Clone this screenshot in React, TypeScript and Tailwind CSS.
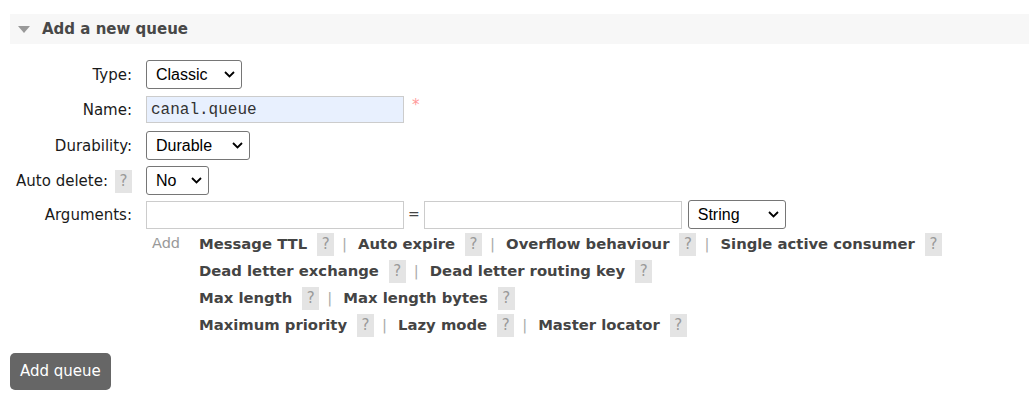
import { ReactNode } from "react";

const verdana = "font-['DejaVu_Sans',Verdana,sans-serif]";

function Help() {
  return (
    <span className="inline-flex h-[23px] w-[17px] items-center justify-center bg-[#e4e4e4] text-[15px] text-[#999] font-normal">
      ?
    </span>
  );
}

function Select({ value, width }: { value: string; width: string }) {
  return (
    <div className={`relative ${width}`}>
      <select
        defaultValue={value}
        className="block h-[29px] w-full appearance-none rounded-[3px] border border-[#767676] bg-white pl-[9px] font-['Liberation_Sans',Arial,sans-serif] text-[16px] text-black"
      >
        <option>{value}</option>
      </select>
      <svg
        className="pointer-events-none absolute right-[7px] top-[11px]"
        width="11"
        height="7"
        viewBox="0 0 11 7"
      >
        <path d="M1 1l4.5 4.5L10 1" fill="none" stroke="#000" strokeWidth="1.8" />
      </svg>
    </div>
  );
}

function Row({ label, children, className = "" }: { label: ReactNode; children: ReactNode; className?: string }) {
  return (
    <div className={`flex items-center ${className}`}>
      <div className="flex w-[122px] items-center justify-end gap-[7px] whitespace-nowrap pt-[2px] text-[15px] text-[#1a1a1a]">{label}</div>
      <div className="ml-[14px] flex items-center">{children}</div>
    </div>
  );
}

function Arg({ name, last }: { name: string; last?: boolean }) {
  return (
    <>
      <span className="font-bold text-[#444]">{name}</span>
      <span className="ml-[10px]">
        <Help />
      </span>
      {!last && <span className="ml-[8px] mr-[11px] text-[#aaa] font-normal">|</span>}
    </>
  );
}

export default function App() {
  return (
    <div className={`h-[408px] w-[1029px] bg-white ${verdana}`}>
      <div className="pl-[10px] pt-[14px]">
        <div className="flex h-[30px] items-center bg-[#f7f7f7]">
          <svg className="ml-[8px]" width="12" height="7" viewBox="0 0 12 7">
            <path d="M0 0h12L6 7z" fill="#999" />
          </svg>
          <h2 className="ml-[12px] text-[15px] font-bold text-[#484848]">Add a new queue</h2>
        </div>
      </div>

      <div className="mt-[16px] pl-[10px]">
        <Row label="Type:">
          <Select value="Classic" width="w-[96px]" />
        </Row>
        <Row label="Name:" className="mt-[7px]">
          <input
            defaultValue="canal.queue"
            className="h-[27px] w-[258px] border border-[#ccc] bg-[#e8f0fe] px-[4px] font-['Liberation_Mono','Courier_New',monospace] text-[16px] text-[#333] outline-none"
          />
          <span className="ml-[8px] -mt-[8px] text-[15px] text-[#f99]">*</span>
        </Row>
        <Row label="Durability:" className="mt-[8px]">
          <Select value="Durable" width="w-[104px]" />
        </Row>
        <Row
          label={
            <>
              <span>Auto delete:</span>
              <Help />
            </>
          }
          className="mt-[6px]"
        >
          <Select value="No" width="w-[63px]" />
        </Row>
        <Row label="Arguments:" className="mt-[5px]">
          <input className="h-[28px] w-[258px] border border-[#ccc] bg-white" />
          <span className="mx-[4px] text-[14px] text-[#444]">=</span>
          <input className="h-[28px] w-[258px] border border-[#ccc] bg-white" />
          <div className="ml-[6px]">
            <Select value="String" width="w-[98px]" />
          </div>
        </Row>

        <div className="ml-[142px] mt-[2px] flex text-[14.8px]">
          <span className="w-[47px] text-[14.5px] text-[#999] leading-[25px]">Add</span>
          <div className="flex flex-col">
            <div className="flex h-[27px] items-center">
              <Arg name="Message TTL" />
              <Arg name="Auto expire" />
              <Arg name="Overflow behaviour" />
              <Arg name="Single active consumer" last />
            </div>
            <div className="flex h-[27px] items-center">
              <Arg name="Dead letter exchange" />
              <Arg name="Dead letter routing key" last />
            </div>
            <div className="flex h-[27px] items-center">
              <Arg name="Max length" />
              <Arg name="Max length bytes" last />
            </div>
            <div className="flex h-[27px] items-center">
              <Arg name="Maximum priority" />
              <Arg name="Lazy mode" />
              <Arg name="Master locator" last />
            </div>
          </div>
        </div>

        <button className="mt-[14px] h-[37px] rounded-[5px] bg-[#666] px-[10px] text-[15px] text-white">
          Add queue
        </button>
      </div>
    </div>
  );
}
